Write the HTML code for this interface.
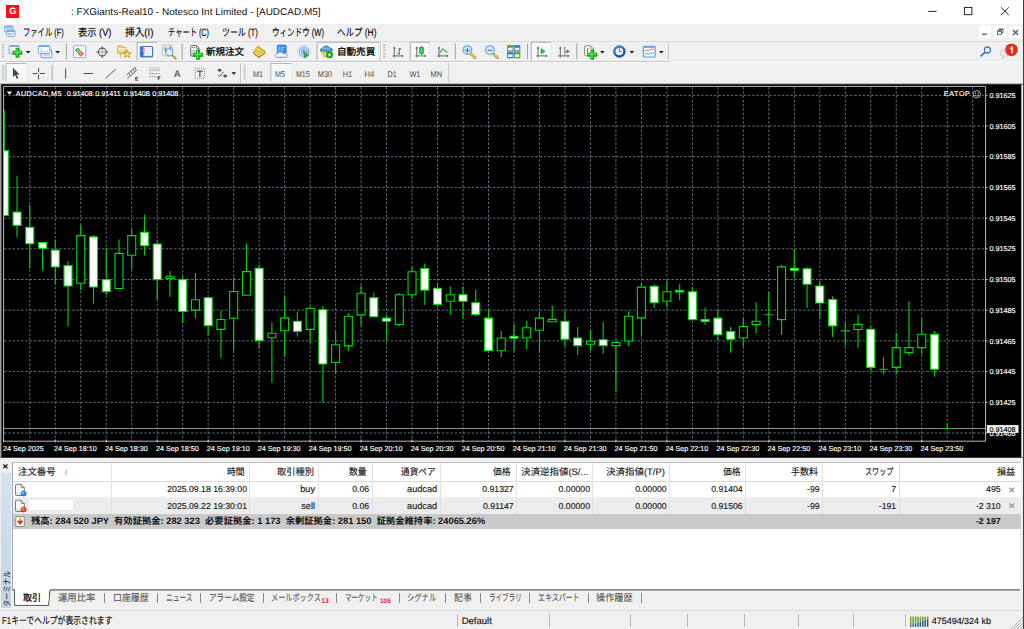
<!DOCTYPE html><html lang="ja"><head><meta charset="utf-8"><title>FXGiants-Real10 - Notesco Int Limited - [AUDCAD,M5]</title><style>
*{box-sizing:border-box;margin:0;padding:0}
html,body{width:1024px;height:629px;overflow:hidden;background:#f0f0f0}
body{font-family:"Liberation Sans",sans-serif;font-size:9px;color:#000;position:relative;text-rendering:geometricPrecision}
svg text{text-rendering:geometricPrecision}
.jt text{font-family:"Liberation Sans","Noto Sans CJK JP",sans-serif;white-space:pre}
#win{position:absolute;left:0;top:0;width:1024px;height:629px;background:#f0f0f0;overflow:hidden}
.abs,.jt,.ic{position:absolute}
.jt{overflow:visible;pointer-events:none}
.ic{overflow:visible}
#title{left:0;top:0;width:1024px;height:24.3px;background:#fff}
#menubar{left:0;top:24.3px;width:1024px;height:16.4px;background:#f0f0f0}
#tb1{left:0;top:41px;width:1024px;height:20.4px;background:#f0f0f0;border-top:1px solid #dcdcdc}
#tb2{left:0;top:62px;width:1024px;height:21px;background:#f0f0f0;border-top:1px solid #fbfbfb}
.lt{position:absolute;white-space:pre;line-height:1}
.sep{position:absolute;width:1px;background:#a8a8a8}
.grip{position:absolute;width:2.4px;background:repeating-linear-gradient(#b4b4b4 0 1px,transparent 1px 2.4px)}
.pressed{position:absolute;background:#f4f8f8;border:1px solid #d9dede;border-top-color:#c2c6c6;border-left-color:#c2c6c6}
#mdi{left:0;top:83px;width:1024px;height:375.6px;background:#f0f0f0}
#term{left:0;top:458px;width:1024px;height:151px;background:#f0f0f0}
#grid{position:absolute;left:12.2px;top:461.6px;width:1008px;height:128.4px;background:#fff;border-left:1px solid #a6a6a6;border-top:1px solid #bdbdbd}
.row{position:absolute;left:0;width:1008px}
.cell{position:absolute;white-space:pre;line-height:1;font-size:8.7px;color:#1a1a1a;text-align:right;-webkit-text-stroke:0.18px #222}
.vsep{position:absolute;top:0;width:1px;height:51.4px;background:#e2e2e2}
#status{left:0;top:609.6px;width:1024px;height:19.4px;background:#f0f0f0;border-top:1px solid #d8d8d8}
.ssep{position:absolute;top:3.5px;width:1px;height:13px;background:#b9b9b9}
</style></head><body><div id="win">
<div id="title" class="abs">
<div class="abs" style="left:6px;top:4.7px;width:13px;height:13px;background:#fa1216"></div>
<div class="lt" style="left:9.2px;top:6.6px;font-size:9.2px;font-weight:bold;color:#fff">G</div>
<svg class="jt" role="img" aria-label=": FXGiants-Real10 - Notesco Int Limited - [AUDCAD,M5]" style="left:71.10px;top:5.30px" width="249.55" height="13.37" ><title>: FXGiants-Real10 - Notesco Int Limited - [AUDCAD,M5]</title><text x="0" y="9.9" font-size="9.9" fill="#111" textLength="249.55" lengthAdjust="spacingAndGlyphs">: FXGiants-Real10 - Notesco Int Limited - [AUDCAD,M5]</text></svg>
<svg class="ic" style="left:900px;top:0px" width="124" height="24" viewBox="900 0 124 24"><g stroke="#1a1a1a" stroke-width="0.95" fill="none"><path d="M928.3 11.4H936.6"/><rect x="964.4" y="7.4" width="7.5" height="7.3"/><path d="M1001.1 7.4L1008.8 15M1008.8 7.4L1001.1 15"/></g></svg>
</div>
<div id="menubar" class="abs"></div>
<svg class="ic" style="left:0px;top:24px" width="20" height="17" viewBox="0 24 20 17"><g fill="none" stroke="#5f9cdc" stroke-width="0.85"><rect x="4.6" y="25.9" width="8.2" height="6" rx="0.8" fill="#fbfdff"/><path d="M4.9 27.1H12.5" stroke-width="1.2"/><path d="M6.2 28.6l.7 1.5.7-1.5.7 1.5.7-1.5M10 30.1l.7-1.5.7 1.5" stroke-width="0.6"/><rect x="6.7" y="30.1" width="8.2" height="6.3" rx="0.8" fill="#fbfdff"/><path d="M7 31.3H14.6" stroke-width="1.2"/><path d="M8.2 33l.8 1.7.8-1.7.8 1.7M11.4 34.7l.8-1.7.8 1.7" stroke-width="0.7"/></g></svg>
<svg class="jt" role="img" aria-label="ファイル (F)" style="left:22.90px;top:25.00px" width="40.60" height="14.18" ><title>ファイル (F)</title><text x="0" y="10.5" font-size="10.5" fill="#000" stroke="#000" stroke-width="0.1" textLength="40.6" lengthAdjust="spacingAndGlyphs">ファイル (F)</text></svg>
<svg class="jt" role="img" aria-label="表示 (V)" style="left:77.80px;top:25.00px" width="33.40" height="14.18" ><title>表示 (V)</title><text x="0" y="10.5" font-size="10.5" fill="#000" stroke="#000" stroke-width="0.1" textLength="33.4" lengthAdjust="spacingAndGlyphs">表示 (V)</text></svg>
<svg class="jt" role="img" aria-label="挿入(I)" style="left:125.00px;top:25.00px" width="28.50" height="14.18" ><title>挿入(I)</title><text x="0" y="10.5" font-size="10.5" fill="#000" stroke="#000" stroke-width="0.1" textLength="28.5" lengthAdjust="spacingAndGlyphs">挿入(I)</text></svg>
<svg class="jt" role="img" aria-label="チャート (C)" style="left:167.50px;top:25.00px" width="41.00" height="14.18" ><title>チャート (C)</title><text x="0" y="10.5" font-size="10.5" fill="#000" stroke="#000" stroke-width="0.1" textLength="41" lengthAdjust="spacingAndGlyphs">チャート (C)</text></svg>
<svg class="jt" role="img" aria-label="ツール (T)" style="left:221.50px;top:25.00px" width="36.00" height="14.18" ><title>ツール (T)</title><text x="0" y="10.5" font-size="10.5" fill="#000" stroke="#000" stroke-width="0.1" textLength="36" lengthAdjust="spacingAndGlyphs">ツール (T)</text></svg>
<svg class="jt" role="img" aria-label="ウィンドウ (W)" style="left:271.50px;top:25.00px" width="52.00" height="14.18" ><title>ウィンドウ (W)</title><text x="0" y="10.5" font-size="10.5" fill="#000" stroke="#000" stroke-width="0.1" textLength="52" lengthAdjust="spacingAndGlyphs">ウィンドウ (W)</text></svg>
<svg class="jt" role="img" aria-label="ヘルプ (H)" style="left:336.50px;top:25.00px" width="39.50" height="14.18" ><title>ヘルプ (H)</title><text x="0" y="10.5" font-size="10.5" fill="#000" stroke="#000" stroke-width="0.1" textLength="39.5" lengthAdjust="spacingAndGlyphs">ヘルプ (H)</text></svg>
<svg class="ic" style="left:970px;top:24px" width="54" height="17" viewBox="970 24 54 17"><g fill="#fff"><rect x="978.5" y="25.8" width="12.6" height="12.4"/><rect x="993.5" y="25.8" width="12.7" height="12.4"/><rect x="1008.5" y="25.8" width="12.9" height="12.4"/></g><g stroke="#4a5f7d" fill="none"><path d="M982 34.2H987.1" stroke-width="1.3"/><path d="M998.9 30.6V29.1H1003.1V32.6H1001.6" stroke-width="0.9"/><rect x="997.5" y="30.9" width="4.1" height="3.4" stroke-width="0.9"/><path d="M997.5 31.2H1001.6M998.9 29.4H1003.1" stroke-width="1.1"/><path d="M1012.9 30L1018.1 34.9M1018.1 30L1012.9 34.9" stroke-width="1.4"/></g></svg>
<div id="tb1" class="abs"></div><div id="tb2" class="abs"></div>
<svg class="ic" style="left:0px;top:41px" width="1024" height="21" viewBox="0 41 1024 21"><path d="M0 61.5H668.4V41.4" fill="none" stroke="#c3c3c3" stroke-width="0.9"/><path d="M380.6 41.6V61" stroke="#bcbcbc" stroke-width="0.9"/><path d="M381.5 42.4V60.4" stroke="#fff" stroke-width="0.9"/><rect x="137.1" y="42.3" width="20" height="17.8" fill="#f5f9f9" stroke="#e1e5e5" stroke-width="0.8"/><path d="M137.1 60.1V42.3H157.1" fill="none" stroke="#a9acac" stroke-width="0.9"/><rect x="317.1" y="42.3" width="61.5" height="17.8" fill="#f5f9f9" stroke="#e1e5e5" stroke-width="0.8"/><path d="M317.1 60.1V42.3H378.6" fill="none" stroke="#a9acac" stroke-width="0.9"/><rect x="410.3" y="42.3" width="19.3" height="17.8" fill="#f5f9f9" stroke="#e1e5e5" stroke-width="0.8"/><path d="M410.3 60.1V42.3H429.6" fill="none" stroke="#a9acac" stroke-width="0.9"/><rect x="531.3" y="42.3" width="19.6" height="17.8" fill="#f5f9f9" stroke="#e1e5e5" stroke-width="0.8"/><path d="M531.3 60.1V42.3H550.9" fill="none" stroke="#a9acac" stroke-width="0.9"/><path d="M3.1 44.2V58.8" stroke="#b6b6b6" stroke-width="2.2" stroke-dasharray="1.2 1.2"/><path d="M384.3 44.2V58.8" stroke="#b6b6b6" stroke-width="2.2" stroke-dasharray="1.2 1.2"/><path d="M66.4 43.2V59.6" stroke="#a6a6a6" stroke-width="1"/><path d="M182.1 43.2V59.6" stroke="#a6a6a6" stroke-width="1"/><path d="M455.3 43.2V59.6" stroke="#a6a6a6" stroke-width="1"/><path d="M527.5 43.2V59.6" stroke="#a6a6a6" stroke-width="1"/><path d="M576.8 43.2V59.6" stroke="#a6a6a6" stroke-width="1"/><rect x="9.1" y="45.6" width="9.9" height="8.2" rx="0.7" fill="#fdfdfd" stroke="#6a9bdb" stroke-width="0.9"/><path d="M9.5 46.4H18.6" stroke="#6a9bdb" stroke-width="1"/><path d="M11.4 48.6v3.6h5" stroke="#9aa7b8" stroke-width="0.6" fill="none"/><path d="M15.95 48.3h3.1v2.95h2.95v3.1h-2.95v2.95h-3.1v-2.95h-2.95v-3.1h2.95z" fill="#19c519" stroke="#0a8a0a" stroke-width="0.7" stroke-linejoin="round"/><path d="M13.9 52.3h7.2M17 49.2v7.2" stroke="#7dee7d" stroke-width="0.8" fill="none"/><path d="M25.9 51h4.6l-2.3 2.5z" fill="#111"/><rect x="41.2" y="49.6" width="10.6" height="8.2" rx="0.7" fill="#fdfdfd" stroke="#5b8fd0" stroke-width="0.9"/><path d="M43.4 55.9h6.4M43.4 54.6h6.4" stroke="#9aa7b8" stroke-width="0.6" fill="none"/><rect x="38.5" y="45.6" width="11.4" height="8" rx="0.7" fill="#fdfdfd" stroke="#6a9bdb" stroke-width="0.9"/><path d="M38.9 46.4H49.5" stroke="#6a9bdb" stroke-width="1"/><path d="M41 48.2v3.6h6.4M47 50.4v1.4" stroke="#8fa0b6" stroke-width="0.6" fill="none"/><path d="M55.4 51h4.6l-2.3 2.5z" fill="#111"/><rect x="73.5" y="45.7" width="12.2" height="12" rx="0.9" fill="#fff" stroke="#86b4ea" stroke-width="1.1"/><path d="M80.2 49h3.6M80.6 50.6h3.2M75.4 54h2.6M75.4 55.6h3" stroke="#d8dde4" stroke-width="0.5"/><path d="M77.7 47.7l2.6 2.6-2.6 2.6-2.6-2.6z" fill="#2fae3f" stroke="#1d8a2c" stroke-width="0.4"/><path d="M77.7 48.9l1.3 1.5h-.8v1.2h-1v-1.2h-.8z" fill="#bff0c6"/><path d="M80.9 51.1l2.7 2.7-2.7 2.7-2.7-2.7z" fill="#e8493a" stroke="#c22e20" stroke-width="0.4"/><path d="M80.9 55.3l1.3-1.5h-.8v-1.2h-1v1.2h-.8z" fill="#fdd3cc"/><g stroke="#5e5e5e" fill="none"><circle cx="102.3" cy="52" r="3.9" stroke-width="1.05"/><path d="M96.2 52h3.4M105 52h3.3M102.3 46.3v3M102.3 54.7v3.2" stroke-width="1.1"/><path d="M99.6 52h5.4M102.3 49.3v5.4" stroke-width="0.8" stroke="#9a9a9a"/></g><path d="M117.5 47.2q0-1.4 1.4-1.4h2.2l1 1.2h2.6q.9 0 .9.9v5.6h-8.1z" fill="#f3d169" stroke="#c59b2c" stroke-width="0.7"/><path d="M118 48.9h7.1" stroke="#fff6d8" stroke-width="1.3"/><path d="M118 50.6h7.1" stroke="#f9e6a6" stroke-width="0.7"/><path d="M120.4 53.8v4" stroke="#6c6c6c" stroke-width="0.75" stroke-dasharray="1 0.7"/><path d="M127.20 49.80L128.32 52.46L131.19 52.70L129.01 54.59L129.67 57.40L127.20 55.90L124.73 57.40L125.39 54.59L123.21 52.70L126.08 52.46Z" fill="#efc93a" stroke="#b68d18" stroke-width="0.7" stroke-linejoin="round"/><path d="M127.20 51.90L127.79 53.29L129.29 53.42L128.15 54.41L128.49 55.88L127.20 55.10L125.91 55.88L126.25 54.41L125.11 53.42L126.61 53.29Z" fill="#f9e27a"/><rect x="140.4" y="46.5" width="12.2" height="10.4" rx="0.9" fill="#fff" stroke="#3f7bd0" stroke-width="1.2"/><rect x="140.6" y="47" width="3" height="9.4" fill="#4a86d8"/><path d="M140.6 56.3h11.8" stroke="#3f7bd0" stroke-width="1.1"/><path d="M145.4 48.9h6.2M145.4 51h6.2M145.4 53.1h6.2" stroke="#c3cfe6" stroke-width="0.7"/><path d="M144.4 48.4v1M144.4 52.6v1" stroke="#e8503c" stroke-width="0.9"/><path d="M144.4 50.4v1M142 48.4v1.2M142 52v3" stroke="#223a5c" stroke-width="0.9"/><rect x="162.5" y="45.3" width="9.8" height="10.6" rx="0.7" fill="#efefef" stroke="#b2b2b2" stroke-width="0.7"/><path d="M163 45.5h8.8" stroke="#d8c88a" stroke-width="0.7"/><path d="M165.3 47v5.4M164.4 48.6h1.8M170.3 46.6v3M169.5 47.6h1.6" stroke="#555" stroke-width="0.75"/><path d="M172.6 55.6l3.2 3.1" stroke="#c6962c" stroke-width="2" stroke-linecap="round"/><circle cx="169.3" cy="52.3" r="3.5" fill="#e3effb" fill-opacity="0.88" stroke="#6faae8" stroke-width="1.2"/><path d="M167.4 51.4a2.2 2.2 0 0 1 2.6-1.4" fill="none" stroke="#fff" stroke-width="0.7"/><linearGradient id="dg2" x1="0" y1="0" x2="0" y2="1"><stop offset="0.3" stop-color="#fff"/><stop offset="1" stop-color="#d9d9d9"/></linearGradient><path d="M190.7 46.6q0-1.1 1.1-1.1h4.6l2.7 2.7v6.8q0 1.1-1.1 1.1h-6.2q-1.1 0-1.1-1.1z" fill="url(#dg2)" stroke="#626262" stroke-width="0.95"/><path d="M196.3 45.7v2.7h2.7" fill="none" stroke="#626262" stroke-width="0.7"/><path d="M192.2 47.4h1.3M194.3 47.4h1" stroke="#444" stroke-width="0.9"/><path d="M192.2 50.3h3.4M192.2 52h2.4" stroke="#9a9a9a" stroke-width="0.7"/><path d="M196.5 50.1h3.2v3.1h3.1v3.2h-3.1v3.1h-3.2v-3.1h-3.1v-3.2h3.1z" fill="#19c519" stroke="#0a8a0a" stroke-width="0.7" stroke-linejoin="round"/><path d="M194.3 54.3h7.6M197.6 51v7.6" stroke="#7dee7d" stroke-width="0.8" fill="none"/><path d="M257.8 46.1l7.5 5.5-.5 1.9-6 4-5.5-4.3.5-1.3z" fill="#e7c32f" stroke="#a37a1c" stroke-width="0.7" stroke-linejoin="round"/><path d="M253.6 53.3l5.2 3.9 5.9-3.9" fill="none" stroke="#b4502a" stroke-width="0.9"/><path d="M254.2 52.6l4.7 3.5 5.4-3.6" fill="none" stroke="#f8ecc0" stroke-width="0.7"/><path d="M257.6 47.6l-2.4 3.8M259.6 48.8l-2.6 4M261.6 50.2l-2.6 4" stroke="#f6e17a" stroke-width="0.8"/><path d="M277.2 46q0-1 1-1h7q1 0 1 1v7.4h-9z" fill="#2d8ce8" stroke="#1f6fc9" stroke-width="0.6"/><path d="M279 46.2v5.6" stroke="#7cc4fb" stroke-width="1.2"/><path d="M281.6 47.6h3.2M281.6 49.6h2.2M281.4 47v4.4" stroke="#9ed6fd" stroke-width="0.9" fill="none"/><path d="M277.6 57.5q-2.6 0-2.4-2.1.3-1.7 2.4-1.6.7-1.8 2.9-1.7 2 .1 2.8 1.7 1.7-.8 3.2.3 1.5 1.2.7 2.5-.5.9-2 .9z" fill="#f4f7fb" stroke="#7f97b3" stroke-width="0.8"/><path d="M276.4 56.6h10" stroke="#c9d5e3" stroke-width="0.8"/><circle cx="304.1" cy="51.6" r="6.2" fill="#e6eef8" stroke="#b4c8e2" stroke-width="0.6"/><g fill="none" stroke="#5a8fd8"><circle cx="304.1" cy="51.6" r="4.7" stroke-width="0.9" stroke-opacity="0.75"/><circle cx="304.1" cy="51.6" r="2.9" stroke-width="0.9"/></g><circle cx="303.9" cy="51.6" r="1.3" fill="#2f6fd0"/><path d="M304.1 52.4l4.8 2.7-4.5 3z" fill="#3aa53c" stroke="#23852a" stroke-width="0.5" stroke-linejoin="round"/><path d="M306.3 50.2q1.8 1.8 2 4.6" fill="none" stroke="#5fb95f" stroke-width="0.9"/><path d="M320.4 50.8l3.4 6 5.6 1 2.8-7z" fill="#f2cf55" stroke="#c9a030" stroke-width="0.7" stroke-linejoin="round"/><path d="M320 50.6q.4-2.6 3.2-3 .8-2 3.2-1.8 2.4.2 3 2 3 .2 3.2 2.8-6.2 2.2-12.6 0z" fill="#4f9be6" stroke="#2f74c4" stroke-width="0.7"/><path d="M322.4 48.4h7" stroke="#a9d0f7" stroke-width="0.7"/><circle cx="329.6" cy="54.8" r="3.2" fill="#22b022" stroke="#0d7f0d" stroke-width="0.6"/><path d="M328.6 53.2l2.6 1.6-2.6 1.6z" fill="#fff"/><g stroke="#626262" stroke-width="0.95" fill="none"><path d="M394.3 47.7V57.6M392.6 55.9H402.8"/></g><path d="M394.3 46.5l1.4 1.9h-2.8zM403.7 55.9l-1.9 -1.4v2.8z" fill="#626262"/><path d="M399.3 48V54.4M399.3 48.6h1.8M397.5 53.6h1.8" stroke="#22a53a" stroke-width="1.1" fill="none"/><g stroke="#626262" stroke-width="0.95" fill="none"><path d="M416.8 47.7V57.6M415.1 55.9H425.6"/></g><path d="M416.8 46.5l1.4 1.9h-2.8zM426.5 55.9l-1.9 -1.4v2.8z" fill="#626262"/><path d="M421.5 45.8V55" stroke="#1c8c2e" stroke-width="0.9"/><rect x="419.7" y="47.6" width="3.6" height="6" fill="#27c244" stroke="#169030" stroke-width="0.7"/><path d="M421.2 48.4v4.4" stroke="#7dea8f" stroke-width="0.9"/><g stroke="#626262" stroke-width="0.95" fill="none"><path d="M439 47.7V57.6M437.2 55.9H447.6"/></g><path d="M439 46.5l1.4 1.9h-2.8zM448.5 55.9l-1.9 -1.4v2.8z" fill="#626262"/><path d="M439.2 53.4q1.6-1.4 2.6-3.2t2-.6q1.4 1.4 3.6 2.6" fill="none" stroke="#2fa84a" stroke-width="1.1"/><path d="M471.3 54.2l3.6 3.4" stroke="#a8801e" stroke-width="2.7" stroke-linecap="round"/><path d="M471.3 54.2l3.6 3.4" stroke="#e3b93f" stroke-width="1.9" stroke-linecap="round"/><path d="M471.7 54l3.4 3.2" stroke="#f6e08e" stroke-width="0.6" stroke-linecap="round"/><circle cx="467.4" cy="50.1" r="4.35" fill="#e3f0fd" stroke="#67a2e4" stroke-width="1.25"/><circle cx="467.4" cy="50.1" r="3.3" fill="none" stroke="#c4dcf6" stroke-width="0.7"/><path d="M464.9 50.4h5M467.4 47.9v5" stroke="#4585c4" stroke-width="1.3"/><path d="M493.8 54.2l3.6 3.4" stroke="#a8801e" stroke-width="2.7" stroke-linecap="round"/><path d="M493.8 54.2l3.6 3.4" stroke="#e3b93f" stroke-width="1.9" stroke-linecap="round"/><path d="M494.2 54l3.4 3.2" stroke="#f6e08e" stroke-width="0.6" stroke-linecap="round"/><circle cx="489.9" cy="50.1" r="4.35" fill="#e3f0fd" stroke="#67a2e4" stroke-width="1.25"/><circle cx="489.9" cy="50.1" r="3.3" fill="none" stroke="#c4dcf6" stroke-width="0.7"/><path d="M487.4 50.4h5" stroke="#4585c4" stroke-width="1.3"/><rect x="507.1" y="45.1" width="6.4" height="6.4" rx="0.5" fill="#4f9d2e"/><path d="M507.6 45.9h5.4" stroke="#7cc04e" stroke-width="0.9"/><rect x="508" y="47.7" width="4.6" height="2.7" fill="#f1f6fc"/><rect x="513.9" y="45.1" width="6.4" height="6.4" rx="0.5" fill="#2e6ed2"/><path d="M514.4 45.9h5.4" stroke="#5c96ea" stroke-width="0.9"/><rect x="514.8" y="47.7" width="4.6" height="2.7" fill="#f1f6fc"/><rect x="507.1" y="51.8" width="6.4" height="6.4" rx="0.5" fill="#2e6ed2"/><path d="M507.6 52.6h5.4" stroke="#5c96ea" stroke-width="0.9"/><rect x="508" y="54.4" width="4.6" height="2.7" fill="#f1f6fc"/><rect x="513.9" y="51.8" width="6.4" height="6.4" rx="0.5" fill="#4f9d2e"/><path d="M514.4 52.6h5.4" stroke="#7cc04e" stroke-width="0.9"/><rect x="514.8" y="54.4" width="4.6" height="2.7" fill="#f1f6fc"/><g stroke="#626262" stroke-width="0.95" fill="none"><path d="M538 47.7V57.6M536.2 55.9H546.8"/></g><path d="M538 46.5l1.4 1.9h-2.8zM547.7 55.9l-1.9 -1.4v2.8z" fill="#626262"/><path d="M541 48.5l4.2 2.8-4.2 2.8z" fill="#2fb84a" stroke="#1c8c2e" stroke-width="0.5"/><g stroke="#626262" stroke-width="0.95" fill="none"><path d="M560.3 47.7V57.6M558.2 55.9H568.6"/></g><path d="M560.3 46.5l1.4 1.9h-2.8zM569.5 55.9l-1.9 -1.4v2.8z" fill="#626262"/><path d="M564.7 46.8V54.8" stroke="#7fa9de" stroke-width="1.6"/><path d="M565.2 51.5l2.6-1.9v1.2h1.6v1.4h-1.6v1.2z" fill="#d8452a"/><path d="M584.6 46.8q0-1 1-1h4.8l3 3v5.9q0 1-1 1h-6.8q-1 0-1-1z" fill="#fcfcfc" stroke="#757575" stroke-width="0.85"/><path d="M590.4 45.8v3h3" fill="none" stroke="#8a8a8a" stroke-width="0.7"/><path d="M587.4 48v6" stroke="#444" stroke-width="0.7"/><path d="M587.4 49.2h1.8" stroke="#e0a020" stroke-width="0.9"/><path d="M590.85 50.1h3.1v3.05h3.05v3.1h-3.05v3.05h-3.1v-3.05h-3.05v-3.1h3.05z" fill="#19c519" stroke="#0a8a0a" stroke-width="0.7" stroke-linejoin="round"/><path d="M588.7 54.2h7.4M591.9 51v7.4" stroke="#7dee7d" stroke-width="0.8" fill="none"/><path d="M600.1 51h4.6l-2.3 2.5z" fill="#111"/><linearGradient id="ckg" x1="0" y1="0" x2="0.6" y2="1"><stop offset="0" stop-color="#3f8fe8"/><stop offset="1" stop-color="#0f4fae"/></linearGradient><circle cx="619.4" cy="51.5" r="4.9" fill="#f4f5f7" stroke="url(#ckg)" stroke-width="2.2"/><circle cx="619.4" cy="51.5" r="6" fill="none" stroke="#174f9c" stroke-width="0.4"/><path d="M619.4 48.2v3.4h2.6" fill="none" stroke="#555" stroke-width="0.8"/><path d="M629.6 51h4.6l-2.3 2.5z" fill="#111"/><rect x="643.3" y="46.4" width="11.8" height="10.6" rx="0.9" fill="#fff" stroke="#5f97e0" stroke-width="1.2"/><path d="M643.6 47.3H654.8" stroke="#7fb0ea" stroke-width="1.5"/><path d="M644.6 50.8l2.4-.8 2 .4 2.4-1.4 2.4.4" fill="none" stroke="#e0603a" stroke-width="0.9"/><path d="M644.6 55l2-1.8 1.8 1.2 2.2-2 1.6 1.4 1.6-1" fill="none" stroke="#3aa84a" stroke-width="0.9"/><path d="M644 52.2h10.4" stroke="#c9d6e8" stroke-width="0.5"/><path d="M659 51h4.6l-2.3 2.5z" fill="#111"/><path d="M985.2 52.2l-4.2 3.6" stroke="#2f74d0" stroke-width="1.7" stroke-linecap="round"/><circle cx="987.4" cy="50" r="3" fill="#fff" stroke="#3a7fd8" stroke-width="1.3"/><path d="M1000.2 53.4q0-3.6 4.4-3.6 4.2 0 4.2 3.4 0 3.2-4 3.4l-2.4 2 .4-2.4q-2.6-.6-2.6-2.8z" fill="#e6e6e6" stroke="#b5b5b5" stroke-width="0.6"/><circle cx="1011.5" cy="49.8" r="6.3" fill="#e0311f"/><path d="M1009.9 47.9l1.9-1.3h.9v6.6h-1.5v-4.8l-1.3.8z" fill="#fff"/></svg><svg class="jt" role="img" aria-label="新規注文" style="left:205.90px;top:44.90px" width="38.10" height="12.96" ><title>新規注文</title><text x="0" y="9.6" font-size="9.6" fill="#000" stroke="#000" stroke-width="0.28" textLength="38.1" lengthAdjust="spacingAndGlyphs">新規注文</text></svg><svg class="jt" role="img" aria-label="自動売買" style="left:336.70px;top:44.90px" width="38.20" height="12.96" ><title>自動売買</title><text x="0" y="9.6" font-size="9.6" fill="#000" stroke="#000" stroke-width="0.28" textLength="38.2" lengthAdjust="spacingAndGlyphs">自動売買</text></svg>
<svg class="ic" style="left:0px;top:62px" width="1024" height="22" viewBox="0 62 1024 22"><path d="M448.6 63V82.5" stroke="#c3c3c3" stroke-width="0.9"/><rect x="6" y="63.5" width="20.4" height="17.7" fill="#f5f9f9" stroke="#dde2e2" stroke-width="0.7" stroke-dasharray="1 1"/><path d="M6 81.2V63.5H26.4" fill="none" stroke="#aeb2b2" stroke-width="0.9"/><rect x="270.9" y="63.5" width="20.6" height="17.7" fill="#f5f9f9" stroke="#dde2e2" stroke-width="0.7" stroke-dasharray="1 1"/><path d="M270.9 81.2V63.5H291.5" fill="none" stroke="#aeb2b2" stroke-width="0.9"/><path d="M3.1 65.2V80" stroke="#b6b6b6" stroke-width="2.2" stroke-dasharray="1.2 1.2"/><path d="M244.7 65.2V80" stroke="#b6b6b6" stroke-width="2.2" stroke-dasharray="1.2 1.2"/><path d="M52.2 64.6V80.6" stroke="#a6a6a6" stroke-width="1"/><path d="M240.5 63.2V82.6" stroke="#b6b6b6" stroke-width="0.9"/><path d="M241.4 63.2V82.6" stroke="#fafafa" stroke-width="0.9"/><path d="M12.9 67.8v9.3l2.2-2 1.7 3.9 1.5-.7-1.7-3.8h3z" fill="#454545"/><path d="M32.8 73.5h4.6M39.8 73.5h5M38.6 67.9v4.4M38.6 74.7v4.8" stroke="#4a4a4a" stroke-width="1"/><path d="M65.6 68.4v10.2M83.5 73.5h9.3" stroke="#505050" stroke-width="1"/><path d="M105.6 78.5l10-9.3" stroke="#5a5a5a" stroke-width="1"/><g stroke="#5e5e5e" stroke-width="0.85" fill="none"><path d="M126.3 75.2l9.2-8.2M127.4 78.6l9.6-8.6"/><path d="M128.8 72.6l1.6 4M131 70.8l1.6 3.8M133.2 68.8l1.6 3.8M135.2 67.2l.6 3" stroke-width="0.75"/></g><path d="M135.4 77.4h2.8M135.4 78.9h2.2M135.4 80.3h2.8M135.7 77.4v2.9" stroke="#444" stroke-width="0.85" fill="none"/><path d="M149.3 67.9h10.9" stroke="#aaa" stroke-width="0.9" stroke-dasharray="1.5 0.7"/><path d="M149.3 70.1h10.9M149.3 73.7h10.9M149.3 76.7h7.4" stroke="#808080" stroke-width="0.9" stroke-dasharray="1.5 0.7"/><path d="M157.9 76.7h2.6M157.9 78.2h2M158.2 76.7v3.4" stroke="#3c3c3c" stroke-width="0.9" fill="none"/><text x="173.7" y="76.9" font-family="Liberation Sans, sans-serif" font-weight="bold" font-size="9.6" fill="#606060">A</text><rect x="195.1" y="68.3" width="9.3" height="10.1" fill="none" stroke="#6a6a6a" stroke-width="0.75" stroke-dasharray="1 1"/><path d="M197 71h5.8M199.9 71v5.9" stroke="#555" stroke-width="1.25" fill="none"/><path d="M219.6 68.5l2.5 1.75-2.5 1.75-2.5-1.75z" fill="#4e4e4e"/><path d="M225.2 74.3l2.5 1.75-2.5 1.75-2.5-1.75z" fill="#4e4e4e"/><path d="M218 74.8l1.7 1.7 3.8-4.7" fill="none" stroke="#4e4e4e" stroke-width="0.95"/><path d="M231.5 72.3h4.6l-2.3 2.5z" fill="#111"/><g font-family="Liberation Sans, sans-serif" font-size="8.3" fill="#4a4a4a"><text x="252.9" y="76.5" textLength="10.1" lengthAdjust="spacingAndGlyphs">M1</text><text x="275" y="76.5" textLength="10" lengthAdjust="spacingAndGlyphs">M5</text><text x="295.9" y="76.5" textLength="13.7" lengthAdjust="spacingAndGlyphs">M15</text><text x="317.8" y="76.5" textLength="14.3" lengthAdjust="spacingAndGlyphs">M30</text><text x="342.8" y="76.5" textLength="9.3" lengthAdjust="spacingAndGlyphs">H1</text><text x="364.4" y="76.5" textLength="9.9" lengthAdjust="spacingAndGlyphs">H4</text><text x="387.5" y="76.5" textLength="9.3" lengthAdjust="spacingAndGlyphs">D1</text><text x="409.4" y="76.5" textLength="11.1" lengthAdjust="spacingAndGlyphs">W1</text><text x="430.5" y="76.5" textLength="11.6" lengthAdjust="spacingAndGlyphs">MN</text></g></svg>
<div id="mdi" class="abs"><div class="abs" style="left:0;top:-0.5px;width:1024px;height:2px;background:linear-gradient(#dcdcdc,#5a5a5a)"></div><div class="abs" style="left:0;top:1.4px;width:1.3px;height:373.2px;background:#a2a2a2"></div><div class="abs" style="left:0;top:374.4px;width:1024px;height:1.5px;background:linear-gradient(#6a6a6a,#b4b4b4)"></div></div>
<svg id="chart" width="1024" height="374" viewBox="0 84 1024 374" style="position:absolute;left:0;top:84px">
<rect x="1.3" y="84.4" width="1020" height="373.1" fill="#000"/>
<path d="M4.1 95.30H985.3M4.1 126.00H985.3M4.1 156.70H985.3M4.1 187.40H985.3M4.1 218.10H985.3M4.1 248.80H985.3M4.1 279.50H985.3M4.1 310.20H985.3M4.1 340.90H985.3M4.1 371.60H985.3M4.1 402.30H985.3M4.1 433.00H985.3M29.78 87.0V440.6M55.27 87.0V440.6M80.75 87.0V440.6M106.24 87.0V440.6M131.72 87.0V440.6M157.20 87.0V440.6M182.69 87.0V440.6M208.17 87.0V440.6M233.66 87.0V440.6M259.14 87.0V440.6M284.62 87.0V440.6M310.11 87.0V440.6M335.59 87.0V440.6M361.08 87.0V440.6M386.56 87.0V440.6M412.04 87.0V440.6M437.53 87.0V440.6M463.01 87.0V440.6M488.50 87.0V440.6M513.98 87.0V440.6M539.46 87.0V440.6M564.95 87.0V440.6M590.43 87.0V440.6M615.92 87.0V440.6M641.40 87.0V440.6M666.88 87.0V440.6M692.37 87.0V440.6M717.85 87.0V440.6M743.34 87.0V440.6M768.82 87.0V440.6M794.30 87.0V440.6M819.79 87.0V440.6M845.27 87.0V440.6M870.76 87.0V440.6M896.24 87.0V440.6M921.72 87.0V440.6M947.21 87.0V440.6M972.69 87.0V440.6" stroke="#64727f" stroke-width="0.95" stroke-dasharray="2.55 1.7" fill="none"/>
<path d="M4.1 428.5H985.6" stroke="#7f8c99" stroke-width="1"/>
<clipPath id="cc"><rect x="4.0" y="86.4" width="982.0" height="354.6"/></clipPath>
<g clip-path="url(#cc)" stroke="#00dc00" stroke-width="1.1">
<path d="M4.30 109.7V150.6M17.04 175.8V212.1M17.04 225.4V237.4M29.78 205.1V227.2M29.78 243.8V268.2M42.53 248.3V270.5M55.27 239.4V250.1M55.27 266.9V284.0M68.01 261.0V265.6M68.01 286.0V326.5M80.75 224.7V235.6M80.75 283.2V290.3M93.49 235.1V236.9M93.49 287.0V303.6M106.24 248.3V279.6M106.24 291.6V294.7M118.98 239.4V253.4M131.72 229.3V235.6M131.72 255.2V269.5M144.46 214.8V232.3M144.46 245.8V255.5M157.20 240.7V244.0M157.20 279.6V300.0M169.95 271.2V276.3M169.95 278.4V296.7M182.69 276.3V279.6M182.69 311.5V322.9M195.43 273.0V299.7M195.43 310.1V318.3M208.17 325.6V335.2M220.91 311.1V319.5M220.91 329.4V358.1M233.66 277.5V291.5M233.66 318.2V350.5M246.40 243.4V271.6M259.14 264.8V268.3M259.14 340.8V348.0M271.88 322.5V333.2M271.88 337.8V382.8M284.62 296.3V317.9M284.62 330.7V356.4M297.37 311.6V321.2M297.37 331.4V336.5M310.11 306.0V308.5M310.11 329.4V342.9M322.85 306.0V309.8M322.85 364.0V402.7M335.59 330.9V344.7M335.59 362.5V373.4M348.33 313.1V316.2M348.33 345.9V351.0M361.08 285.6V293.3M361.08 314.9V325.8M373.82 292.7V297.8M386.56 315.3V318.1M386.56 321.3V341.3M399.30 292.9V294.7M399.30 324.5V326.5M412.04 266.7V271.8M412.04 294.7V298.5M424.79 263.4V268.5M424.79 290.1V304.9M437.53 283.3V288.3M437.53 304.4V307.4M450.27 286.6V294.7M450.27 301.3V315.1M463.01 286.6V294.7M463.01 301.3V318.4M475.75 289.6V302.8M475.75 314.6V316.3M488.50 310.0V318.1M501.24 331.1V338.0M501.24 350.7V357.0M513.98 324.0V336.2M513.98 338.2V351.2M526.72 320.9V327.8M526.72 338.0V349.4M539.46 311.2V318.1M539.46 330.3V352.7M552.21 305.6V319.4M564.95 310.7V321.4M564.95 339.2V346.4M577.69 327.0V338.0M577.69 345.6V355.0M590.43 330.3V341.3M590.43 344.3V350.7M603.17 321.9V339.7M603.17 345.6V353.7M615.92 340.5V342.5M615.92 345.6V391.4M628.66 311.2V316.3M628.66 341.0V346.1M641.40 282.7V287.1M641.40 317.9V336.7M654.14 284.5V286.3M654.14 302.8V307.9M666.88 280.7V291.7M666.88 301.3V307.4M679.63 284.0V290.4M679.63 291.9V300.3M692.37 287.1V291.7M705.11 307.4V319.6M705.11 321.4V324.7M717.85 310.0V318.1M717.85 334.7V340.5M730.59 327.0V331.6M730.59 339.2V352.7M743.34 318.1V326.5M743.34 338.0V346.4M756.08 302.4V321.2M756.08 324.6V333.6M768.82 292.3V325.4M764.42 314.7H773.22M781.56 265.1V266.9M781.56 319.6V335.1M794.30 249.1V268.2M794.30 270.2V278.3M807.05 266.9V268.7M807.05 284.2V308.1M819.79 280.9V286.0M819.79 303.0V318.5M832.53 296.2V299.5M832.53 325.9V336.9M845.27 322.1V345.8M840.87 330.8H849.67M858.01 314.5V324.4M858.01 329.5V347.8M870.76 326.2V329.2M870.76 367.4V371.2M883.50 357.2V374.3M879.10 369.2H887.90M896.24 333.0V347.6M896.24 367.4V374.5M908.98 301.2V347.6M908.98 352.6V355.2M921.72 319.1V334.3M921.72 347.6V354.2M934.47 331.0V334.3M934.47 369.2V376.8M947.21 423.4V428.5M942.81 428.5H951.61" fill="none" stroke="#00cc00" stroke-width="1.15"/>
<path d="M76.75 235.6h8v47.6h-8zM114.98 253.4h8v35.1h-8zM127.72 235.6h8v19.6h-8zM165.95 276.3h8v2.1h-8zM191.43 299.7h8v10.4h-8zM216.91 319.5h8v9.9h-8zM229.66 291.5h8v26.7h-8zM242.40 271.6h8v23.7h-8zM267.88 333.2h8v4.6h-8zM280.62 317.9h8v12.8h-8zM306.11 308.5h8v20.9h-8zM331.59 344.7h8v17.8h-8zM344.33 316.2h8v29.7h-8zM357.08 293.3h8v21.6h-8zM395.30 294.7h8v29.8h-8zM408.04 271.8h8v22.9h-8zM446.27 294.7h8v6.6h-8zM497.24 338.0h8v12.7h-8zM522.72 327.8h8v10.2h-8zM535.46 318.1h8v12.2h-8zM548.21 319.4h8v2.3h-8zM586.43 341.3h8v3.0h-8zM611.92 342.5h8v3.1h-8zM624.66 316.3h8v24.7h-8zM637.40 287.1h8v30.8h-8zM662.88 291.7h8v9.6h-8zM739.34 326.5h8v11.5h-8zM752.08 321.2h8v3.4h-8zM777.56 266.9h8v52.7h-8zM854.01 324.4h8v5.1h-8zM892.24 347.6h8v19.8h-8zM904.98 347.6h8v5.0h-8zM917.72 334.3h8v13.3h-8z" fill="#000"/>
<path d="M0.30 150.6h8v64.9h-8zM13.04 212.1h8v13.3h-8zM25.78 227.2h8v16.6h-8zM38.53 242.5h8v5.8h-8zM51.27 250.1h8v16.8h-8zM64.01 265.6h8v20.4h-8zM89.49 236.9h8v50.1h-8zM102.24 279.6h8v12.0h-8zM140.46 232.3h8v13.5h-8zM153.20 244.0h8v35.6h-8zM178.69 279.6h8v31.9h-8zM204.17 297.8h8v27.8h-8zM255.14 268.3h8v72.5h-8zM293.37 321.2h8v10.2h-8zM318.85 309.8h8v54.2h-8zM369.82 297.8h8v18.9h-8zM382.56 318.1h8v3.2h-8zM420.79 268.5h8v21.6h-8zM433.53 288.3h8v16.1h-8zM459.01 294.7h8v6.6h-8zM471.75 302.8h8v11.8h-8zM484.50 318.1h8v32.6h-8zM509.98 336.2h8v2.0h-8zM560.95 321.4h8v17.8h-8zM573.69 338.0h8v7.6h-8zM599.17 339.7h8v5.9h-8zM650.14 286.3h8v16.5h-8zM675.63 290.4h8v1.5h-8zM688.37 291.7h8v27.9h-8zM701.11 319.6h8v1.8h-8zM713.85 318.1h8v16.6h-8zM726.59 331.6h8v7.6h-8zM790.30 268.2h8v2.0h-8zM803.05 268.7h8v15.5h-8zM815.79 286.0h8v17.0h-8zM828.53 299.5h8v26.4h-8zM866.76 329.2h8v38.2h-8zM930.47 334.3h8v34.9h-8z" fill="#fff"/>
</g>
<path d="M3.6 86.4H985.6V441.2H3.6ZM985.6 95.30h2M985.6 126.00h2M985.6 156.70h2M985.6 187.40h2M985.6 218.10h2M985.6 248.80h2M985.6 279.50h2M985.6 310.20h2M985.6 340.90h2M985.6 371.60h2M985.6 402.30h2M985.6 433.00h2M3.60 439.5v3M55.27 439.5v3M106.24 439.5v3M157.20 439.5v3M208.17 439.5v3M259.14 439.5v3M310.11 439.5v3M361.08 439.5v3M412.04 439.5v3M463.01 439.5v3M513.98 439.5v3M564.95 439.5v3M615.92 439.5v3M666.88 439.5v3M717.85 439.5v3M768.82 439.5v3M819.79 439.5v3M870.76 439.5v3M921.72 439.5v3" stroke="#e6e6e6" stroke-width="0.8" fill="none"/>
<g font-family="Liberation Sans, sans-serif" font-size="7.2" fill="#f4f4f4" stroke="#f4f4f4" stroke-width="0.18">
<text x="989.6" y="97.90">0.91625</text>
<text x="989.6" y="128.60">0.91605</text>
<text x="989.6" y="159.30">0.91585</text>
<text x="989.6" y="190.00">0.91565</text>
<text x="989.6" y="220.70">0.91545</text>
<text x="989.6" y="251.40">0.91525</text>
<text x="989.6" y="282.10">0.91505</text>
<text x="989.6" y="312.80">0.91485</text>
<text x="989.6" y="343.50">0.91465</text>
<text x="989.6" y="374.20">0.91445</text>
<text x="989.6" y="404.90">0.91425</text>
<text x="989.6" y="435.60">0.91405</text>
<text x="3.00" y="451.2">24 Sep 2025</text>
<text x="53.97" y="451.2">24 Sep 18:10</text>
<text x="104.94" y="451.2">24 Sep 18:30</text>
<text x="155.90" y="451.2">24 Sep 18:50</text>
<text x="206.87" y="451.2">24 Sep 19:10</text>
<text x="257.84" y="451.2">24 Sep 19:30</text>
<text x="308.81" y="451.2">24 Sep 19:50</text>
<text x="359.78" y="451.2">24 Sep 20:10</text>
<text x="410.74" y="451.2">24 Sep 20:30</text>
<text x="461.71" y="451.2">24 Sep 20:50</text>
<text x="512.68" y="451.2">24 Sep 21:10</text>
<text x="563.65" y="451.2">24 Sep 21:30</text>
<text x="614.62" y="451.2">24 Sep 21:50</text>
<text x="665.58" y="451.2">24 Sep 22:10</text>
<text x="716.55" y="451.2">24 Sep 22:30</text>
<text x="767.52" y="451.2">24 Sep 22:50</text>
<text x="818.49" y="451.2">24 Sep 23:10</text>
<text x="869.46" y="451.2">24 Sep 23:30</text>
<text x="920.42" y="451.2">24 Sep 23:50</text>
<text x="15.8" y="95.6" textLength="45.6" lengthAdjust="spacing">AUDCAD,M5</text>
<text x="66.8" y="95.6">0.91408</text>
<text x="95.2" y="95.6">0.91411</text>
<text x="123.7" y="95.6">0.91408</text>
<text x="152.3" y="95.6">0.91408</text>
<text x="943.8" y="95.6" textLength="26.1" lengthAdjust="spacing">EATOP</text>
</g>
<path d="M6.8 91.6h5.2l-2.6 3.2z" fill="#fff"/>
<g stroke="#f0f0f0" stroke-width="0.7" fill="none"><circle cx="976.8" cy="94.2" r="3.7"/><path d="M974.8 95.2q2 1.9 4 0"/></g><g fill="#f0f0f0"><circle cx="975.5" cy="93.1" r=".65"/><circle cx="978.1" cy="93.1" r=".65"/></g>
<rect x="986.9" y="425.1" width="31.6" height="7.8" fill="#f4f4f4"/>
<text x="989.6" y="431.6" font-family="Liberation Sans, sans-serif" font-size="7.2" fill="#000" stroke="#000" stroke-width="0.15">0.91408</text>
</svg>
<div id="term" class="abs"></div>
<div class="abs" style="left:0.8px;top:472.6px;width:10.6px;height:135px;background:linear-gradient(#d6e3f1,#c3d4e6)"></div>
<svg class="ic" style="left:2px;top:463px" width="7" height="7" viewBox="2 463 7 7"><path d="M3.3 464.5L7.5 468.2M7.5 464.5L3.3 468.2" stroke="#1c1c1c" stroke-width="1.25"/></svg>
<svg class="jt" role="img" aria-label="ターミナル" style="left:0.5px;top:606.8px;transform:rotate(-90deg);transform-origin:0 0" width="36.30" height="11.61" ><title>ターミナル</title><text x="0" y="8.6" font-size="8.6" fill="#222" textLength="36.3" lengthAdjust="spacingAndGlyphs">ターミナル</text></svg>
<div id="grid">
<div class="row" style="top:0;height:19.6px;background:#fff;border-bottom:1px solid #dadada"></div>
<div class="row" style="top:19.6px;height:16.2px;background:#fff;border-bottom:1px solid #efefef"></div>
<div class="row" style="top:35.8px;height:15.6px;background:#ececec"></div>
<div class="row" style="top:51.4px;height:14.8px;background:#c9c9c9"></div>
<div class="vsep" style="left:98.3px"></div>
<div class="vsep" style="left:236.3px"></div>
<div class="vsep" style="left:305.2px"></div>
<div class="vsep" style="left:358.5px"></div>
<div class="vsep" style="left:427.3px"></div>
<div class="vsep" style="left:503.0px"></div>
<div class="vsep" style="left:579.3px"></div>
<div class="vsep" style="left:655.7px"></div>
<div class="vsep" style="left:732.3px"></div>
<div class="vsep" style="left:809.1px"></div>
<div class="vsep" style="left:885.7px"></div>
</div>
<svg class="jt" role="img" aria-label="注文番号" style="left:17.90px;top:466.20px" width="38.60" height="12.69" ><title>注文番号</title><text x="0" y="9.4" font-size="9.4" fill="#1c1c1c" stroke="#1c1c1c" stroke-width="0.15" textLength="37.6" lengthAdjust="spacingAndGlyphs">注文番号</text></svg>
<svg class="jt" role="img" aria-label="時間" style="left:227.10px;top:466.20px" width="18.60" height="12.69" ><title>時間</title><text x="0" y="9.4" font-size="9.4" fill="#1c1c1c" stroke="#1c1c1c" stroke-width="0.15" textLength="17.6" lengthAdjust="spacingAndGlyphs">時間</text></svg>
<svg class="jt" role="img" aria-label="取引種別" style="left:276.70px;top:466.20px" width="38.00" height="12.69" ><title>取引種別</title><text x="0" y="9.4" font-size="9.4" fill="#1c1c1c" stroke="#1c1c1c" stroke-width="0.15" textLength="37" lengthAdjust="spacingAndGlyphs">取引種別</text></svg>
<svg class="jt" role="img" aria-label="数量" style="left:348.90px;top:466.20px" width="18.60" height="12.69" ><title>数量</title><text x="0" y="9.4" font-size="9.4" fill="#1c1c1c" stroke="#1c1c1c" stroke-width="0.15" textLength="17.6" lengthAdjust="spacingAndGlyphs">数量</text></svg>
<svg class="jt" role="img" aria-label="通貨ペア" style="left:401.00px;top:466.20px" width="35.60" height="12.69" ><title>通貨ペア</title><text x="0" y="9.4" font-size="9.4" fill="#1c1c1c" stroke="#1c1c1c" stroke-width="0.15" textLength="34.6" lengthAdjust="spacingAndGlyphs">通貨ペア</text></svg>
<svg class="jt" role="img" aria-label="価格" style="left:493.10px;top:466.20px" width="18.60" height="12.69" ><title>価格</title><text x="0" y="9.4" font-size="9.4" fill="#1c1c1c" stroke="#1c1c1c" stroke-width="0.15" textLength="17.6" lengthAdjust="spacingAndGlyphs">価格</text></svg>
<svg class="jt" role="img" aria-label="決済逆指値(S/..." style="left:521.30px;top:466.20px" width="68.40" height="12.69" ><title>決済逆指値(S/...</title><text x="0" y="9.4" font-size="9.4" fill="#1c1c1c" stroke="#1c1c1c" stroke-width="0.15" textLength="67.4" lengthAdjust="spacingAndGlyphs">決済逆指値(S/...</text></svg>
<svg class="jt" role="img" aria-label="決済指値(T/P)" style="left:606.00px;top:466.20px" width="60.00" height="12.69" ><title>決済指値(T/P)</title><text x="0" y="9.4" font-size="9.4" fill="#1c1c1c" stroke="#1c1c1c" stroke-width="0.15" textLength="59" lengthAdjust="spacingAndGlyphs">決済指値(T/P)</text></svg>
<svg class="jt" role="img" aria-label="価格" style="left:723.40px;top:466.20px" width="18.60" height="12.69" ><title>価格</title><text x="0" y="9.4" font-size="9.4" fill="#1c1c1c" stroke="#1c1c1c" stroke-width="0.15" textLength="17.6" lengthAdjust="spacingAndGlyphs">価格</text></svg>
<svg class="jt" role="img" aria-label="手数料" style="left:790.70px;top:466.20px" width="28.00" height="12.69" ><title>手数料</title><text x="0" y="9.4" font-size="9.4" fill="#1c1c1c" stroke="#1c1c1c" stroke-width="0.15" textLength="27" lengthAdjust="spacingAndGlyphs">手数料</text></svg>
<svg class="jt" role="img" aria-label="スワップ" style="left:865.20px;top:466.20px" width="29.50" height="12.69" ><title>スワップ</title><text x="0" y="9.4" font-size="9.4" fill="#1c1c1c" stroke="#1c1c1c" stroke-width="0.15" textLength="28.5" lengthAdjust="spacingAndGlyphs">スワップ</text></svg>
<svg class="jt" role="img" aria-label="損益" style="left:996.90px;top:466.20px" width="19.00" height="12.69" ><title>損益</title><text x="0" y="9.4" font-size="9.4" fill="#1c1c1c" stroke="#1c1c1c" stroke-width="0.15" textLength="18" lengthAdjust="spacingAndGlyphs">損益</text></svg>
<div class="lt" style="left:65px;top:468.6px;font-size:7.5px;color:#777">/</div>
<svg class="ic" style="left:160px;top:482px" width="860" height="48" viewBox="160 482 860 48"><g font-family="Liberation Sans, sans-serif" text-anchor="end" fill="#1c1c1c" stroke="#1c1c1c" stroke-width="0.16"><text x="247.0" y="492.4" font-size="8.7">2025.09.18 16:39:00</text><text x="315.0" y="492.4" font-size="9.2">buy</text><text x="369.2" y="492.4" font-size="8.7">0.06</text><text x="437.2" y="492.4" font-size="9.2">audcad</text><text x="513.7" y="492.4" font-size="8.7">0.91327</text><text x="590.0" y="492.4" font-size="8.7">0.00000</text><text x="666.7" y="492.4" font-size="8.7">0.00000</text><text x="742.7" y="492.4" font-size="8.7">0.91404</text><text x="819.6" y="492.4" font-size="8.7">-99</text><text x="896.2" y="492.4" font-size="8.7">7</text><text x="1000.6" y="492.4" font-size="8.7">495</text><text x="247.0" y="508.9" font-size="8.7">2025.09.22 19:30:01</text><text x="315.0" y="508.9" font-size="9.2">sell</text><text x="369.2" y="508.9" font-size="8.7">0.06</text><text x="437.2" y="508.9" font-size="9.2">audcad</text><text x="513.7" y="508.9" font-size="8.7">0.91147</text><text x="590.0" y="508.9" font-size="8.7">0.00000</text><text x="666.7" y="508.9" font-size="8.7">0.00000</text><text x="742.7" y="508.9" font-size="8.7">0.91506</text><text x="819.6" y="508.9" font-size="8.7">-99</text><text x="896.2" y="508.9" font-size="8.7">-191</text><text x="1000.6" y="508.9" font-size="8.7">-2 310</text><text x="1000.6" y="524.3" font-size="8.7" font-weight="bold">-2 197</text></g></svg>
<svg class="ic" style="left:1008px;top:486px" width="8" height="24" viewBox="1008 486 8 24"><path d="M1009.5 487.7l4.4 4.4m0-4.4l-4.4 4.4M1009.5 503.4l4.4 4.4m0-4.4l-4.4 4.4" stroke="#9a9a9a" stroke-width="1.35" fill="none"/></svg>
<svg class="ic" style="left:12px;top:480px" width="20" height="50" viewBox="12 480 20 50"><linearGradient id="docg" x1="0" y1="0" x2="0" y2="1"><stop offset="0.45" stop-color="#fff"/><stop offset="1" stop-color="#dcdcdc"/></linearGradient><path d="M15.5 485.3q0-1 1-1h4.6l3.2 3.2v7q0 1-1 1h-6.8q-1 0-1-1z" fill="url(#docg)" stroke="#676767" stroke-width="0.85"/><path d="M21.1 484.3v3.2h3.2" fill="none" stroke="#676767" stroke-width="0.7"/><circle cx="23.7" cy="493.5" r="2.6" fill="#2b93ea" stroke="#1767c4" stroke-width="0.6"/><circle cx="23.2" cy="492.7" r="1" fill="#9fd2fb"/><path d="M15.5 501.3q0-1 1-1h4.6l3.2 3.2v7q0 1-1 1h-6.8q-1 0-1-1z" fill="url(#docg)" stroke="#676767" stroke-width="0.85"/><path d="M21.1 500.3v3.2h3.2" fill="none" stroke="#676767" stroke-width="0.7"/><circle cx="23.7" cy="509.5" r="2.6" fill="#e2512b" stroke="#b03010" stroke-width="0.6"/><circle cx="23.2" cy="508.7" r="1" fill="#f7a58a"/><rect x="15.8" y="516.7" width="8.5" height="9.8" rx="0.8" fill="#fdfdfd" stroke="#777" stroke-width="0.85"/><path d="M20.05 518.6v3.4M17.7 521.3l2.35 2.9 2.35-2.9z" stroke="#dc3a1c" stroke-width="1.1" fill="#dc3a1c" stroke-linejoin="round"/><path d="M18.3 520.4l1.75-1.7 1.75 1.7" fill="none" stroke="#f2a227" stroke-width="0.8"/></svg>
<div class="abs" style="left:28.9px;top:499.7px;width:43.7px;height:10.5px;background:#fff"></div>
<svg class="jt" role="img" aria-label="残高: 284 520 JPY  有効証拠金: 282 323  必要証拠金: 1 173  余剰証拠金: 281 150  証拠金維持率: 24065.26%" style="left:31.10px;top:515.40px" width="455.50" height="12.42" ><title>残高: 284 520 JPY  有効証拠金: 282 323  必要証拠金: 1 173  余剰証拠金: 281 150  証拠金維持率: 24065.26%</title><text x="0" y="9.2" font-size="9.2" font-weight="bold" fill="#111" textLength="454.2" lengthAdjust="spacingAndGlyphs" xml:space="preserve">残高: 284 520 JPY  有効証拠金: 282 323  必要証拠金: 1 173  余剰証拠金: 281 150  証拠金維持率: 24065.26%</text></svg>
<svg class="abs" style="left:0;top:588px" width="1024" height="22" viewBox="0 588 1024 22"><path d="M12.2 589.9H14.7V605.3H48.5L49.9 589.9H1020" fill="none" stroke="#3c3c3c" stroke-width="1"/><path d="M15.2 589.4H49.4L48.1 604.8H15.2Z" fill="#fff"/></svg>
<svg class="jt" role="img" aria-label="取引" style="left:22.70px;top:591.60px" width="19.00" height="12.69" ><title>取引</title><text x="0" y="9.4" font-size="9.4" fill="#000" stroke="#000" stroke-width="0.25" textLength="18" lengthAdjust="spacingAndGlyphs">取引</text></svg>
<svg class="jt" role="img" aria-label="運用比率" style="left:57.60px;top:591.40px" width="38.40" height="12.96" ><title>運用比率</title><text x="0" y="9.6" font-size="9.6" fill="#555" stroke="#555" stroke-width="0.1" textLength="37.4" lengthAdjust="spacingAndGlyphs">運用比率</text></svg>
<svg class="jt" role="img" aria-label="口座履歴" style="left:112.90px;top:591.40px" width="36.70" height="12.96" ><title>口座履歴</title><text x="0" y="9.6" font-size="9.6" fill="#555" stroke="#555" stroke-width="0.1" textLength="35.7" lengthAdjust="spacingAndGlyphs">口座履歴</text></svg>
<svg class="jt" role="img" aria-label="ニュース" style="left:166.00px;top:591.40px" width="27.60" height="12.96" ><title>ニュース</title><text x="0" y="9.6" font-size="9.6" fill="#555" stroke="#555" stroke-width="0.1" textLength="26.6" lengthAdjust="spacingAndGlyphs">ニュース</text></svg>
<svg class="jt" role="img" aria-label="アラーム設定" style="left:208.50px;top:591.40px" width="46.50" height="12.96" ><title>アラーム設定</title><text x="0" y="9.6" font-size="9.6" fill="#555" stroke="#555" stroke-width="0.1" textLength="45.5" lengthAdjust="spacingAndGlyphs">アラーム設定</text></svg>
<svg class="jt" role="img" aria-label="メールボックス" style="left:270.60px;top:591.40px" width="50.80" height="12.96" ><title>メールボックス</title><text x="0" y="9.6" font-size="9.6" fill="#555" stroke="#555" stroke-width="0.1" textLength="49.8" lengthAdjust="spacingAndGlyphs">メールボックス</text></svg>
<svg class="jt" role="img" aria-label="マーケット" style="left:344.70px;top:591.40px" width="33.70" height="12.96" ><title>マーケット</title><text x="0" y="9.6" font-size="9.6" fill="#555" stroke="#555" stroke-width="0.1" textLength="32.7" lengthAdjust="spacingAndGlyphs">マーケット</text></svg>
<svg class="jt" role="img" aria-label="シグナル" style="left:407.20px;top:591.40px" width="30.20" height="12.96" ><title>シグナル</title><text x="0" y="9.6" font-size="9.6" fill="#555" stroke="#555" stroke-width="0.1" textLength="29.2" lengthAdjust="spacingAndGlyphs">シグナル</text></svg>
<svg class="jt" role="img" aria-label="記事" style="left:453.70px;top:591.40px" width="18.90" height="12.96" ><title>記事</title><text x="0" y="9.6" font-size="9.6" fill="#555" stroke="#555" stroke-width="0.1" textLength="17.9" lengthAdjust="spacingAndGlyphs">記事</text></svg>
<svg class="jt" role="img" aria-label="ライブラリ" style="left:488.80px;top:591.40px" width="33.70" height="12.96" ><title>ライブラリ</title><text x="0" y="9.6" font-size="9.6" fill="#555" stroke="#555" stroke-width="0.1" textLength="32.7" lengthAdjust="spacingAndGlyphs">ライブラリ</text></svg>
<svg class="jt" role="img" aria-label="エキスパート" style="left:538.00px;top:591.40px" width="42.50" height="12.96" ><title>エキスパート</title><text x="0" y="9.6" font-size="9.6" fill="#555" stroke="#555" stroke-width="0.1" textLength="41.5" lengthAdjust="spacingAndGlyphs">エキスパート</text></svg>
<svg class="jt" role="img" aria-label="操作履歴" style="left:596.40px;top:591.40px" width="37.60" height="12.96" ><title>操作履歴</title><text x="0" y="9.6" font-size="9.6" fill="#555" stroke="#555" stroke-width="0.1" textLength="36.6" lengthAdjust="spacingAndGlyphs">操作履歴</text></svg>
<div class="abs" style="left:103.6px;top:593.2px;width:1px;height:10px;background:#8a8a8a"></div>
<div class="abs" style="left:157.2px;top:593.2px;width:1px;height:10px;background:#8a8a8a"></div>
<div class="abs" style="left:200.4px;top:593.2px;width:1px;height:10px;background:#8a8a8a"></div>
<div class="abs" style="left:262.5px;top:593.2px;width:1px;height:10px;background:#8a8a8a"></div>
<div class="abs" style="left:336.4px;top:593.2px;width:1px;height:10px;background:#8a8a8a"></div>
<div class="abs" style="left:399.0px;top:593.2px;width:1px;height:10px;background:#8a8a8a"></div>
<div class="abs" style="left:444.7px;top:593.2px;width:1px;height:10px;background:#8a8a8a"></div>
<div class="abs" style="left:479.9px;top:593.2px;width:1px;height:10px;background:#8a8a8a"></div>
<div class="abs" style="left:529.1px;top:593.2px;width:1px;height:10px;background:#8a8a8a"></div>
<div class="abs" style="left:587.8px;top:593.2px;width:1px;height:10px;background:#8a8a8a"></div>
<div class="abs" style="left:641.3px;top:593.2px;width:1px;height:10px;background:#8a8a8a"></div>
<div class="lt" style="left:321.2px;top:599.4px;font-size:6.8px;font-weight:bold;color:#ea2a1e">13</div><div class="lt" style="left:380px;top:599.4px;font-size:6.5px;font-weight:bold;color:#ea2a1e">105</div>
<div id="status" class="abs">
<div class="ssep" style="left:456.7px"></div>
<div class="ssep" style="left:549.1px"></div>
<div class="ssep" style="left:630.0px"></div>
<div class="ssep" style="left:687.1px"></div>
<div class="ssep" style="left:743.7px"></div>
<div class="ssep" style="left:798.2px"></div>
<div class="ssep" style="left:853.4px"></div>
<div class="ssep" style="left:905.4px"></div>
<div class="lt" style="left:461.7px;top:6.5px;font-size:9.5px;color:#111;-webkit-text-stroke:0.15px #111">Default</div>
<div class="lt" style="left:931.8px;top:6.9px;font-size:8.95px;color:#111;-webkit-text-stroke:0.15px #111">475494/324 kb</div>
<svg class="ic" style="left:905px;top:2px" width="30" height="16" viewBox="905 611.6 30 16"><rect x="910.00" y="615.2" width="1.45" height="8.60" fill="#6f9f24"/><rect x="910.00" y="623.80" width="1.45" height="1.60" fill="#1d5c8c"/><rect x="912.42" y="615.2" width="1.45" height="7.74" fill="#6f9f24"/><rect x="912.42" y="622.94" width="1.45" height="2.46" fill="#1d5c8c"/><rect x="914.84" y="615.2" width="1.45" height="6.88" fill="#6f9f24"/><rect x="914.84" y="622.08" width="1.45" height="3.32" fill="#1d5c8c"/><rect x="917.26" y="615.2" width="1.45" height="6.02" fill="#6f9f24"/><rect x="917.26" y="621.22" width="1.45" height="4.18" fill="#1d5c8c"/><rect x="919.68" y="615.2" width="1.45" height="5.16" fill="#6f9f24"/><rect x="919.68" y="620.36" width="1.45" height="5.04" fill="#1d5c8c"/><rect x="922.10" y="615.2" width="1.45" height="4.30" fill="#6f9f24"/><rect x="922.10" y="619.50" width="1.45" height="5.90" fill="#1d5c8c"/><rect x="924.52" y="615.2" width="1.45" height="3.44" fill="#6f9f24"/><rect x="924.52" y="618.64" width="1.45" height="6.76" fill="#1d5c8c"/><rect x="926.94" y="615.2" width="1.45" height="2.58" fill="#6f9f24"/><rect x="926.94" y="617.78" width="1.45" height="7.62" fill="#1d5c8c"/></svg>
</div>
<svg class="jt" role="img" aria-label="F1キーでヘルプが表示されます" style="left:1.80px;top:614.40px" width="111.40" height="13.50" ><title>F1キーでヘルプが表示されます</title><text x="0" y="10" font-size="10" fill="#111" stroke="#111" stroke-width="0.18" textLength="110.4" lengthAdjust="spacingAndGlyphs">F1キーでヘルプが表示されます</text></svg>
<div class="abs" style="left:1023px;top:0;width:1px;height:629px;background:#2e3f55"></div>
<svg class="ic" style="left:1010px;top:616px" width="13" height="13" viewBox="0 0 13 13"><path d="M1 13L13 1M4 13L13 4M7 13L13 7M10 13L13 10" stroke="#a8a8a8" stroke-width="0.9"/></svg>
</div></body></html>
